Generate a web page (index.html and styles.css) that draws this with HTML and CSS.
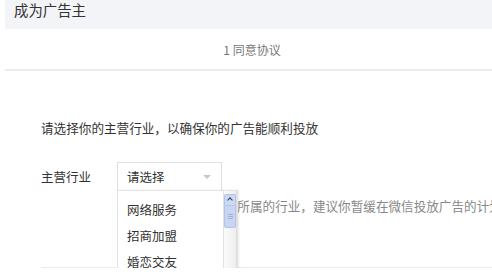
FILE: index.html
```html
<!DOCTYPE html>
<html lang="zh-CN">
<head>
  <meta charset="UTF-8">
  <title>成为广告主</title>
  <link rel="stylesheet" href="styles.css">
</head>
<body>
  <div class="page">
    <div class="header">成为广告主</div>
    <div class="steps">1 同意协议</div>

    <div class="content">
      <p class="intro">请选择你的主营行业，以确保你的广告能顺利投放</p>

      <div class="row">
        <div class="label">主营行业</div>
        <div class="field">
          <div class="select">
            <span>请选择</span>
            <i class="arrow"></i>
          </div>
          <p class="hint">如果以上选项没有你所属的行业，建议你暂缓在微信投放广告的计划</p>

          <div class="dropdown">
            <ul class="options">
              <li>网络服务</li>
              <li>招商加盟</li>
              <li>婚恋交友</li>
            </ul>
            <div class="scrollbar">
              <div class="scroll-up"></div>
              <div class="scroll-thumb"><b></b><b></b><b></b></div>
            </div>
          </div>
        </div>
      </div>

      <div class="divider"></div>
    </div>
  </div>
</body>
</html>
```

FILE: styles.css
```css
body {
  margin: 0;
  font-family: "Noto Sans CJK SC", "Noto Sans", sans-serif;
  background-color: #fff;
  color: #333;
  overflow: hidden;
}
.page {
  margin-left: 5px;
}
.header {
  height: 29px;
  line-height: 20px;
  padding-left: 9px;
  background-color: #f3f4f7;
  font-size: 14.4px;
  color: #333;
}
.steps {
  height: 40px;
  line-height: 42px;
  text-align: center;
  padding-left: 7px;
  font-size: 12px;
  color: #777;
  border-bottom: 2px solid #ececec;
}
.content {
  padding-left: 36px;
}
.intro {
  margin: 48px 0 0;
  font-size: 12.6px;
  line-height: 18px;
  color: #333;
}
.row {
  display: flex;
  margin-top: 25px;
}
.label {
  flex-shrink: 0;
  width: 76px;
  line-height: 30px;
  font-size: 12.5px;
  color: #333;
}
.field {
  position: relative;
  flex: 1;
  min-width: 0;
}
.select {
  width: 94px;
  height: 27px;
  border: 1px solid #e0e0e0;
  display: flex;
  align-items: center;
  justify-content: space-between;
  padding-left: 9px;
  font-size: 12.5px;
  color: #333;
}
.arrow {
  width: 0;
  height: 0;
  margin-right: 10px;
  border-left: 4px solid transparent;
  border-right: 4px solid transparent;
  border-top: 4px solid #c8c8c8;
}
.hint {
  margin: 6px 0 0 7px;
  font-size: 12.6px;
  line-height: 18px;
  color: #888;
  white-space: nowrap;
}
.dropdown {
  position: absolute;
  left: 0;
  top: 28px;
  width: 121px;
  height: 88px;
  background-color: #fff;
  border: 1px solid #e3e3e3;
  border-bottom: none;
  box-sizing: border-box;
  display: flex;
  overflow: hidden;
  box-shadow: 1px 0 2px rgba(0, 0, 0, 0.08);
}
.options {
  list-style: none;
  margin: 0;
  padding: 6px 0 0 9px;
  flex: 1;
  border-right: 1px solid #e2e2e2;
}
.options li {
  height: 26px;
  line-height: 26px;
  font-size: 12.5px;
  color: #333;
}
.scrollbar {
  width: 12px;
  padding-top: 3px;
  background: linear-gradient(to right, #fbfbfb, #eeeeee);
  border-right: 1px solid #ddd;
}
.scroll-up {
  height: 10px;
  background-color: #cdd9f3;
  border: 1px solid #b3c4e8;
  border-bottom: none;
  border-radius: 2px 2px 0 0;
  position: relative;
}
.scroll-up::after {
  content: "";
  position: absolute;
  left: 3px;
  top: 3px;
  width: 3px;
  height: 3px;
  border-left: 1.5px solid #2a3e6e;
  border-top: 1.5px solid #2a3e6e;
  transform: rotate(45deg);
}
.scroll-thumb {
  height: 21px;
  background-color: #c9d6f2;
  border: 1px solid #b3c4e8;
  border-radius: 0 0 2px 2px;
  display: flex;
  flex-direction: column;
  align-items: center;
  justify-content: center;
  gap: 1px;
}
.scroll-thumb b {
  width: 5px;
  height: 1px;
  background-color: #9bb0dc;
}
.divider {
  margin-top: 52px;
  border-top: 1px solid #ebebeb;
}
```
